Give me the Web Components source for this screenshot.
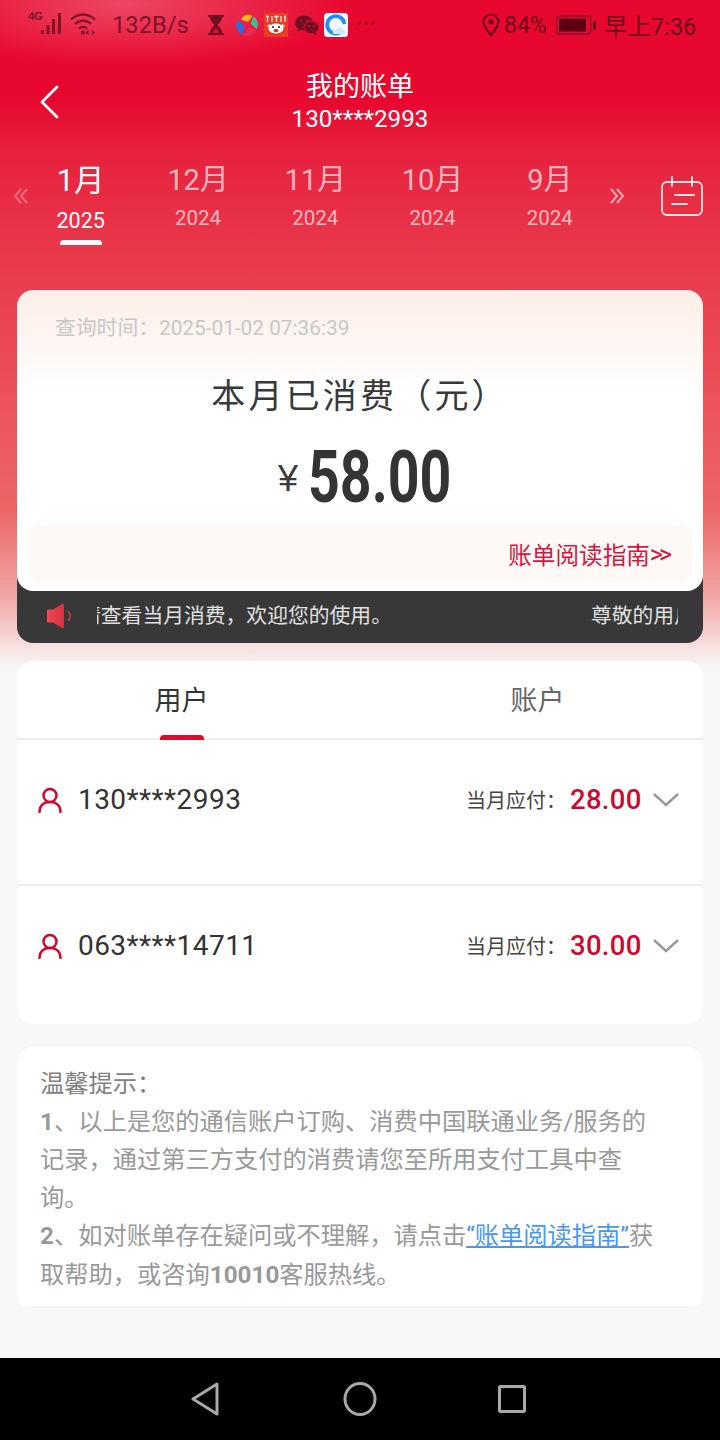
<!DOCTYPE html>
<html lang="zh">
<head>
<meta charset="utf-8">
<title>我的账单</title>
<style>
  html, body { margin: 0; padding: 0; }
  body { font-family: Roboto, "Noto Sans CJK SC", sans-serif; }
</style>
</head>
<body>
<bill-app>
  <status-bar></status-bar>
  <bill-header title-text="我的账单" phone="130****2993"></bill-header>
  <month-strip>
    <month-item month="1月" year="2025" active></month-item>
    <month-item month="12月" year="2024"></month-item>
    <month-item month="11月" year="2024"></month-item>
    <month-item month="10月" year="2024"></month-item>
    <month-item month="9月" year="2024"></month-item>
  </month-strip>
  <spend-card query-time="查询时间：2025-01-02 07:36:39" amount="58.00"></spend-card>
  <notice-bar></notice-bar>
  <bill-panel>
    <bill-row account="130****2993" amount="28.00"></bill-row>
    <bill-row account="063****14711" amount="30.00"></bill-row>
  </bill-panel>
  <tip-card></tip-card>
  <nav-bar></nav-bar>
</bill-app>

<script>
function defineEl(name, html, setup) {
  customElements.define(name, class extends HTMLElement {
    constructor() {
      super();
      this.attachShadow({ mode: 'open' });
      this.shadowRoot.innerHTML = html;
    }
    connectedCallback() {
      if (setup) setup(this, this.shadowRoot);
    }
  });
}

defineEl('bill-app', `
  <style>
    :host {
      display: flex;
      flex-direction: column;
      width: 720px;
      height: 1440px;
      overflow: hidden;
      font-family: Roboto, "Noto Sans CJK SC", sans-serif;
      background:
        radial-gradient(ellipse 230px 62px at 125px 4px, rgba(255,255,255,.26), rgba(255,255,255,0)),
        linear-gradient(180deg, #e8072e 0, #e8082f 100px, #e6213d 150px, #ea3a4c 260px, #ec6565 510px, #f2a9a9 600px, #f6e4e4 650px, #f7f7f7 668px);
    }
  </style>
  <slot></slot>
`);

defineEl('status-bar', `
  <style>
    :host {
      display: flex;
      align-items: center;
      height: 50px;
      padding-left: 28px;
      box-sizing: border-box;
      color: #7d1428;
      font-size: 23.700px;
      flex: none;
    }
    svg { display: block; flex: none; }
    .g4 { font: 700 11.500px "Liberation Sans Narrow", "Liberation Sans", sans-serif; width: 13px; margin-top: -18px; letter-spacing: -.3px; }
    .speed { margin-left: 13px; width: 96px; }
    .right { color: #6b0a1c; }
    .pct { margin-left: 2px; width: 46px; font-size: 23px; }
    .clock { margin-left: 7px; font-size: 23.500px; white-space: nowrap; }
  </style>
  <span class="g4">4G</span>
  <svg width="22" height="22" viewBox="0 0 22 22" style="margin-top:-2px"><g fill="#7d1428"><rect x="0" y="17" width="3" height="4" rx="1"/><rect x="5.500" y="12" width="3" height="9"/><rect x="11" y="6" width="3" height="15"/><rect x="17" y="0" width="3" height="21"/></g></svg>
  <svg width="30" height="24" viewBox="0 0 30 24" style="margin-left:6px;margin-top:-2px" fill="none" stroke="#7d1428" stroke-width="2.300"><path d="M2 7.500C9 1 19 1 26 7.500"/><path d="M6 12c5-4.400 11-4.400 16 0"/><path d="M10 16.500c3-2.400 5-2.400 8 0"/><circle cx="14" cy="20.500" r="2" fill="#7d1428" stroke="none"/><path d="M19.500 18v5l-3-2.500z M23 18v5l3-2.500z" fill="#7d1428" stroke="none"/></svg>
  <span class="speed">132B/s</span>
  <svg width="16" height="22" viewBox="0 0 16 22"><path d="M0 1h16v2h-2c0 4-3 6-4.500 8C11 13 14 15 14 19h2v2H0v-2h2c0-4 3-6 4.500-8C5 9 2 7 2 3H0z" fill="#6f0f20"/><path d="M4.500 19c.5-2 2-3.500 3.500-4.500 1.500 1 3 2.500 3.500 4.500z" fill="#e8082f"/></svg>
  <svg width="24" height="24" viewBox="0 0 24 24" style="margin-left:11px">
    <path d="M6 6.500C8 1.500 14 .5 17.500 3L13 9z" fill="#f4b91c"/>
    <path d="M18.500 3.500C23 6.500 24 12 21.500 16L15.500 10.500z" fill="#35c48f"/>
    <path d="M21 17c-2 5-8 7-12.500 5L13 14.500z" fill="#ec2a57"/>
    <path d="M7.500 21.500C2 19 -1 12.500 3 7l6.500 7z" fill="#2a6fe0"/>
  </svg>
  <svg width="24" height="24" viewBox="0 0 24 24" style="margin-left:5px">
    <rect width="24" height="24" fill="#ec3b25"/>
    <path d="M2 3.500h3M3.500 3v6M8 3v6M10 3.500h5M12.500 3v6M17 3v6M20 3.500h2M21 3v6" stroke="#ffd9c9" stroke-width="1.400" fill="none"/>
    <ellipse cx="12" cy="15.500" rx="7.500" ry="5" fill="#fff"/>
    <path d="M3 13l3-2 1 4zM21 13l-3-2-1 4z" fill="#fff"/>
    <circle cx="9" cy="14" r="1" fill="#3a1010"/><circle cx="15" cy="14" r="1" fill="#3a1010"/>
    <ellipse cx="12" cy="17.500" rx="2.500" ry="1.500" fill="#d0241b"/>
  </svg>
  <svg width="24" height="20" viewBox="0 0 24 20" style="margin-left:7px">
    <ellipse cx="9" cy="8" rx="9" ry="7.500" fill="#6f0f20"/>
    <path d="M3.500 12.500l-1 4 4-2z" fill="#6f0f20"/>
    <ellipse cx="16.500" cy="12.500" rx="7.500" ry="6.300" fill="#6f0f20" stroke="#e8082f" stroke-width="1"/>
    <path d="M20.500 17l1.500 3-4-1.500z" fill="#6f0f20"/>
    <circle cx="6" cy="6" r="1.100" fill="#e8082f"/><circle cx="12" cy="6" r="1.100" fill="#e8082f"/>
    <circle cx="14" cy="11" r=".9" fill="#e8082f"/><circle cx="19" cy="11" r=".9" fill="#e8082f"/>
  </svg>
  <svg width="24" height="24" viewBox="0 0 24 24" style="margin-left:5px">
    <rect width="24" height="24" rx="3.500" fill="#f2f8fd"/>
    <path d="M17.500 18.500A8.700 8.700 0 1 1 20.500 11" fill="none" stroke="#1e8ff0" stroke-width="3.600"/>
    <path d="M9 20c0-2.800 2-3.800 4-3.800 1-2.500 5.500-2 6 1 2 .3 2.800 2.800 1 3.800H10.500C9.500 21 9 20.700 9 20z" fill="#cfe8fb"/>
  </svg>
  <svg width="18" height="4" viewBox="0 0 18 4" style="margin-left:9px;margin-top:-4px"><g fill="#7d1428"><circle cx="2" cy="2" r="1.500"/><circle cx="9" cy="2" r="1.500"/><circle cx="16" cy="2" r="1.500"/></g></svg>
  <svg width="20" height="24" viewBox="0 0 20 24" style="margin-left:107px" fill="none" stroke="#6b0a1c" stroke-width="2.200"><path d="M9 22C5 17 1.500 13.500 1.500 9a7.500 7.500 0 0 1 15 0C16.500 13.500 13 17 9 22z"/><circle cx="9" cy="9" r="2.500" fill="#6b0a1c" stroke="none"/></svg>
  <span class="pct right">84%</span>
  <svg width="41" height="20" viewBox="0 0 41 20" style="margin-left:6px"><rect x=".7" y="1" width="34" height="18" rx="2.500" fill="none" stroke="#7d1428" stroke-width="1.300"/><rect x="3" y="3.500" width="27" height="13" fill="#5c0012"/><rect x="37" y="6" width="3" height="9" fill="#6b0a1c"/></svg>
  <span class="clock right">早上7:36</span>
`);

defineEl('bill-header', `
  <style>
    :host {
      display: block;
      position: relative;
      height: 100px;
      flex: none;
      color: #fff;
      text-align: center;
    }
    .title { font-size: 27px; line-height: 32px; padding-top: 21px; }
    .phone { font-size: 24.200px; line-height: 32px; }
    svg { position: absolute; left: 40px; top: 35px; }
  </style>
  <svg width="20" height="34" viewBox="0 0 20 34" fill="none" stroke="#fff" stroke-width="2.800" stroke-linecap="round" stroke-linejoin="round"><path d="M17 2L2 17l15 15"/></svg>
  <div class="title"></div>
  <div class="phone"></div>
`, (el, root) => {
  root.querySelector('.title').textContent = el.getAttribute('title-text');
  root.querySelector('.phone').textContent = el.getAttribute('phone');
});

defineEl('month-strip', `
  <style>
    :host {
      display: flex;
      align-items: flex-start;
      height: 140px;
      flex: none;
      box-sizing: border-box;
      padding-left: 14px;
    }
    .side { flex: none; margin-top: 38px; }
    .list { display: flex; margin-left: -6px; }
    .cal { flex: none; margin: 26px 0 0 36px; }
  </style>
  <svg class="side" width="14" height="16" viewBox="0 0 14 16" fill="none" stroke="rgba(255,255,255,.3)" stroke-width="2"><path d="M7 1L1 8l6 7M13 1L7 8l6 7"/></svg>
  <div class="list"><slot></slot></div>
  <svg class="side" style="margin-left:2px" width="14" height="16" viewBox="0 0 14 16" fill="none" stroke="rgba(255,255,255,.6)" stroke-width="2"><path d="M1 1l6 7-6 7M7 1l6 7-6 7"/></svg>
  <svg class="cal" width="44" height="42" viewBox="0 0 44 42" fill="none" stroke="rgba(255,255,255,.88)" stroke-width="1.800" stroke-linecap="round"><rect x="2" y="6" width="40" height="33" rx="5"/><path d="M12 1v9M32 1v9M15 19h19M12 28h15"/></svg>
`);

defineEl('month-item', `
  <style>
    :host {
      display: flex;
      flex-direction: column;
      align-items: center;
      width: 117.300px;
      color: rgba(255,255,255,.68);
      position: relative;
    }
    .m { font-size: 29px; line-height: 38px; margin-top: 11px; }
    .y { font-size: 20.500px; line-height: 26px; margin-top: 6px; }
    :host([active]) { color: #fff; height: 95px; }
    :host([active]) .m { font-size: 30.500px; margin-top: 12px; }
    :host([active]) .y { font-size: 21.500px; margin-top: 8px; }
    .bar { display: none; width: 42px; height: 5px; border-radius: 4px 4px 0 0; background: #fff; margin-top: 6px; }
    :host([active]) .bar { display: block; }
  </style>
  <span class="m"></span>
  <span class="y"></span>
  <span class="bar"></span>
`, (el, root) => {
  root.querySelector('.m').textContent = el.getAttribute('month');
  root.querySelector('.y').textContent = el.getAttribute('year');
});

defineEl('spend-card', `
  <style>
    :host {
      display: block;
      position: relative;
      z-index: 1;
      height: 301px;
      flex: none;
      box-sizing: border-box;
      margin: 0 17px;
      border-radius: 16px;
      padding: 24px 11px 0;
      background: linear-gradient(180deg, #fdeee8 0, #fef6f2 50px, #fff 100px);
      color: #333;
    }
    .time { font-size: 20.800px; line-height: 28px; color: #c8c8c8; padding-left: 27px; }
    .label { font-size: 34px; line-height: 46px; text-align: center; letter-spacing: 3.200px; margin-top: 31px; color: #383838; }
    .sum { display: flex; justify-content: center; align-items: center; height: 80px; margin-top: 18px; padding-left: 7px; }
    .yen { font-family: "Liberation Sans", sans-serif; font-size: 36px; margin-right: 10px; margin-top: 4px; color: #3a3a3a; }
    .num { width: 141px; font-size: 73px; font-weight: 700; color: #343434; line-height: 80px; white-space: nowrap; }
    .num span { display: inline-block; transform: scaleX(.76); transform-origin: left center; }
    .guide {
      display: flex;
      justify-content: flex-end;
      align-items: center;
      height: 58px;
      margin-top: 8px;
      padding-right: 20px;
      border-radius: 10px;
      background: #fef9f6;
      color: #d5173d;
      font-size: 23.600px;
    }
    .arrows { letter-spacing: -4px; padding-right: 4px; font-size: 25px; }
  </style>
  <div class="time"></div>
  <div class="label">本月已消费（元）</div>
  <div class="sum"><span class="yen">¥</span><div class="num"><span></span></div></div>
  <div class="guide">账单阅读指南<span class="arrows">&gt;&gt;</span></div>
`, (el, root) => {
  root.querySelector('.time').textContent = el.getAttribute('query-time');
  root.querySelector('.num span').textContent = el.getAttribute('amount');
});

defineEl('notice-bar', `
  <style>
    :host {
      display: flex;
      align-items: center;
      height: 68px;
      flex: none;
      box-sizing: border-box;
      margin: -16px 17px 0;
      padding: 16px 25px 0 30px;
      border-radius: 0 0 16px 16px;
      background: #383838;
      color: #e0e0e0;
    }
    svg { flex: none; margin-top: -2px; }
    .view { flex: 1; overflow: hidden; margin-left: 25px; margin-top: -7px; }
    .track { white-space: nowrap; font-size: 20.800px; margin-left: -17px; }
    .gap { display: inline-block; width: 199px; }
  </style>
  <svg width="25" height="26" viewBox="0 0 25 26">
    <defs><linearGradient id="sp" x1="0" x2="1"><stop offset="0" stop-color="#ef4a55"/><stop offset="1" stop-color="#d9303f"/></linearGradient></defs>
    <path d="M0 8c0-1 .5-1.500 1.500-1.500H6L15 1c1-.5 2 0 2 1v22c0 1-1 1.500-2 1l-9-5.500H1.500C.5 19.500 0 19 0 18z" fill="url(#sp)"/>
    <path d="M21 8c2.500 3 2.500 7 0 10" fill="none" stroke="#d9303f" stroke-width="1.800"/>
  </svg>
  <div class="view"><div class="track">请查看当月消费，欢迎您的使用。<span class="gap"></span>尊敬的用户，您好</div></div>
`);

defineEl('bill-panel', `
  <style>
    :host {
      display: block;
      flex: none;
      margin: 18px 17px 0;
      height: 363px;
      border-radius: 16px;
      background: #fff;
      overflow: hidden;
    }
    .tabs {
      display: flex;
      justify-content: center;
      gap: 296px;
      height: 77px;
      margin-bottom: 1px;
      border-bottom: 2px solid #ededed;
      padding-right: 1px;
    }
    .tab { position: relative; width: 60px; text-align: center; font-size: 27px; line-height: 80px; color: #666; }
    .on { color: #333; }
    .on::after { content: ""; position: absolute; left: 8px; bottom: -2px; width: 44px; height: 5px; border-radius: 4px 4px 0 0; background: #e00a30; }
  </style>
  <div class="tabs"><div class="tab on">用户</div><div class="tab">账户</div></div>
  <slot></slot>
`);

defineEl('bill-row', `
  <style>
    :host {
      display: flex;
      align-items: center;
      height: 145px;
      box-sizing: border-box;
      padding: 0 24px 26px 21px;
      border-bottom: 2px solid #eee;
      color: #333;
    }
    :host(:last-child) { border-bottom: 0; }
    svg { flex: none; }
    .acc { flex: 1; margin-left: 16px; font-size: 28px; font-weight: 400; letter-spacing: .45px; }
    .lab { font-size: 20px; color: #444; }
    .amt { margin-left: 4px; width: 71px; font-size: 27.500px; font-weight: 500; color: #d2072f; letter-spacing: .3px; white-space: nowrap; }
    .chev { margin-left: 12px; }
  </style>
  <svg width="24" height="26" viewBox="0 0 24 26" fill="none" stroke="#d2072f" stroke-width="2.500" stroke-linecap="round"><circle cx="12" cy="8.500" r="6.500"/><path d="M1.500 25c0-6 4-10 10.500-10s10.500 4 10.500 10"/></svg>
  <span class="acc"></span>
  <span class="lab">当月应付：</span>
  <span class="amt"></span>
  <svg class="chev" width="26" height="14" viewBox="0 0 26 14" fill="none" stroke="#999" stroke-width="2.400"><path d="M1 1l12 11L25 1"/></svg>
`, (el, root) => {
  root.querySelector('.acc').textContent = el.getAttribute('account');
  root.querySelector('.amt').textContent = el.getAttribute('amount');
});

defineEl('tip-card', `
  <style>
    :host {
      display: block;
      flex: none;
      height: 259px;
      box-sizing: border-box;
      margin: 23px 17px 0;
      padding: 17.500px 43px 0 23px;
      border-radius: 16px 16px 10px 10px;
      background: #fff;
      color: #999;
      font-size: 24.250px;
      line-height: 38.200px;
    }
    .head { color: #808080; }
    b { font-weight: 700; }
    a { color: #4a98ee; text-decoration: underline; }
  </style>
  <div class="head">温馨提示：</div>
  <div><b>1</b>、以上是您的通信账户订购、消费中国联通业务/服务的记录，通过第三方支付的消费请您至所用支付工具中查询。</div>
  <div><b>2</b>、如对账单存在疑问或不理解，请点击<a>“账单阅读指南”</a>获取帮助，或咨询<b>10010</b>客服热线。</div>
`);

defineEl('nav-bar', `
  <style>
    :host {
      display: flex;
      justify-content: center;
      align-items: center;
      gap: 118px;
      height: 82px;
      flex: none;
      margin-top: auto;
      background: #000;
    }
    svg { display: block; }
  </style>
  <svg width="34" height="36" viewBox="0 0 34 36" fill="none" stroke="#a8a8a8" stroke-width="3" stroke-linejoin="round"><path d="M26 3v30L2 18z"/></svg>
  <svg width="34" height="34" viewBox="0 0 34 34" fill="none" stroke="#a8a8a8" stroke-width="3"><ellipse cx="17" cy="17" rx="15" ry="15.500"/></svg>
  <svg width="34" height="34" viewBox="0 0 34 34" fill="none" stroke="#a8a8a8" stroke-width="3" stroke-linejoin="round"><rect x="4.500" y="4.500" width="25" height="25" rx="1"/></svg>
`);
</script>
</body>
</html>
